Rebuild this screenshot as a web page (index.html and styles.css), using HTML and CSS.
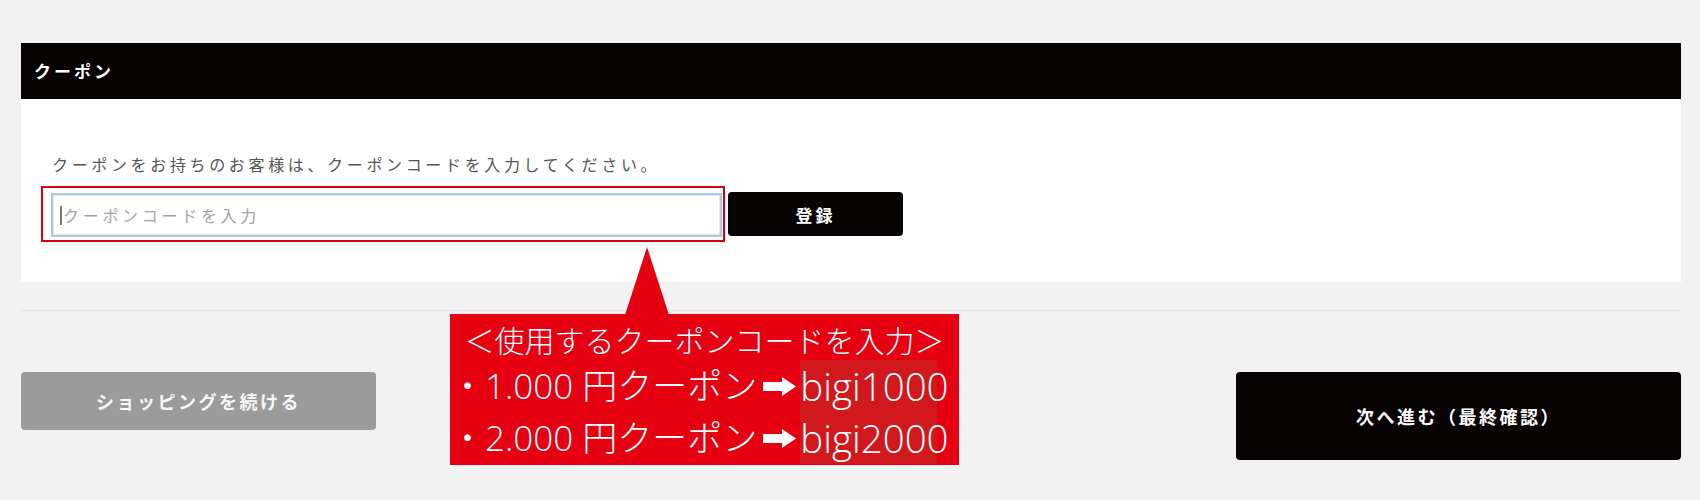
FILE: index.html
```html
<!DOCTYPE html>
<html lang="ja">
<head>
<meta charset="utf-8">
<title>クーポン</title>
<link rel="stylesheet" href="styles.css">
</head>
<body>
<div class="page">
  <section class="coupon">
    <h2 class="coupon-head">クーポン</h2>
    <div class="coupon-body">
      <p class="coupon-note">クーポンをお持ちのお客様は、クーポンコードを入力してください。</p>
      <div class="coupon-row">
        <div class="highlight">
          <div class="field">
            <input class="field-input" type="text" placeholder="クーポンコードを入力">
            <span class="caret"></span>
          </div>
        </div>
        <button class="btn-register" type="button">登録</button>
      </div>
    </div>
  </section>
  <hr class="divider">
  <div class="actions">
    <button class="btn-continue" type="button">ショッピングを続ける</button>
    <button class="btn-next" type="button">次へ進む（最終確認）</button>
  </div>
  <div class="callout">
    <div class="callout-title">＜使用するクーポンコードを入力＞</div>
    <div class="callout-line">・1.000 円クーポン<svg class="arrow" viewBox="0 0 33 19" width="33" height="19"><path d="M0 5h19V0l14 9.5-14 9.5v-5H0z" fill="#fff"/></svg><span class="code">bigi1000</span></div>
    <div class="callout-line">・2.000 円クーポン<svg class="arrow" viewBox="0 0 33 19" width="33" height="19"><path d="M0 5h19V0l14 9.5-14 9.5v-5H0z" fill="#fff"/></svg><span class="code">bigi2000</span></div>
  </div>
</div>
</body>
</html>
```

FILE: styles.css
```css
* { box-sizing: border-box; }
html, body { margin: 0; padding: 0; }
body {
  background: #f2f2f2;
  font-family: "Noto Sans CJK JP", "Noto Sans", sans-serif;
  width: 1700px;
  height: 500px;
  overflow: hidden;
}
.page {
  position: relative;
  padding: 43px 19px 0 21px;
}
.coupon {
  background: #fff;
}
.coupon-head {
  margin: 0;
  height: 56px;
  background: #070303;
  color: #fff;
  font-size: 17px;
  font-weight: 700;
  letter-spacing: 3px;
  line-height: 56px;
  padding-left: 13px;
}
.coupon-body {
  padding: 53px 20px 40px;
}
.coupon-note {
  margin: 0 0 10px 11px;
  font-size: 16px;
  line-height: 24px;
  letter-spacing: 3.65px;
  color: #555;
}
.coupon-row {
  display: flex;
  align-items: flex-start;
}
.highlight {
  border: 2px solid #d7000f;
  padding: 5px 1px 3px 8px;
}
.field {
  position: relative;
  width: 671px;
  height: 44px;
}
.field-input {
  display: block;
  width: 100%;
  height: 100%;
  border: 2px solid #adc9e2;
  box-shadow: inset 0 0 0 1px #dde9f4;
  padding: 0 0 0 10px;
  font-family: "Noto Sans CJK JP", sans-serif;
  font-size: 16px;
  letter-spacing: 3.7px;
  color: #333;
  outline: none;
  background: #fff;
}
.field-input::placeholder { color: #a3a3a3; }
.caret {
  position: absolute;
  left: 9px;
  top: 13px;
  width: 2px;
  height: 19px;
  background: #777;
}
.btn-register {
  margin: 6px 0 0 3px;
  width: 175px;
  height: 44px;
  border: 0;
  border-radius: 4px;
  background: #070303;
  color: #fff;
  font-family: "Noto Sans CJK JP", sans-serif;
  font-size: 17px;
  font-weight: 700;
  letter-spacing: 3px;
}
.divider {
  margin: 28px 0 0;
  border: 0;
  height: 1px;
  background: #e4e4e4;
}
.actions {
  margin-top: 61px;
  display: flex;
  justify-content: space-between;
  align-items: flex-start;
}
.btn-continue {
  width: 355px;
  height: 58px;
  border: 0;
  border-radius: 4px;
  background: #9b9b9b;
  color: #f7f7f7;
  font-family: "Noto Sans CJK JP", sans-serif;
  font-size: 18px;
  font-weight: 700;
  letter-spacing: 2.5px;
}
.btn-next {
  width: 445px;
  height: 88px;
  border: 0;
  border-radius: 4px;
  background: #070303;
  color: #fff;
  font-family: "Noto Sans CJK JP", sans-serif;
  font-size: 18px;
  font-weight: 700;
  letter-spacing: 2.5px;
}
.callout {
  position: absolute;
  left: 450px;
  top: 314px;
  width: 509px;
  height: 151px;
  background: #e50012;
  color: #fff;
  padding-top: 4px;
  font-family: "Open Sans", "Noto Sans CJK JP", sans-serif;
  font-weight: 300;
  white-space: nowrap;
}
.callout::before {
  content: "";
  position: absolute;
  left: 175px;
  top: -67px;
  border-left: 22px solid transparent;
  border-right: 22px solid transparent;
  border-bottom: 68px solid #e50012;
}
.callout-title {
  font-family: "Noto Sans CJK JP", sans-serif;
  font-size: 30px;
  line-height: 42px;
  text-align: center;
}
.callout-line {
  font-size: 35px;
  line-height: 52px;
  height: 52px;
}
.arrow {
  display: inline-block;
  vertical-align: 3px;
  margin: 0 4px 0 6px;
}
.code {
  display: inline-block;
  width: 137px;
  height: 52px;
  font-size: 38.5px;
  line-height: 52px;
  vertical-align: top;
  background: #d0181d;
}
```
